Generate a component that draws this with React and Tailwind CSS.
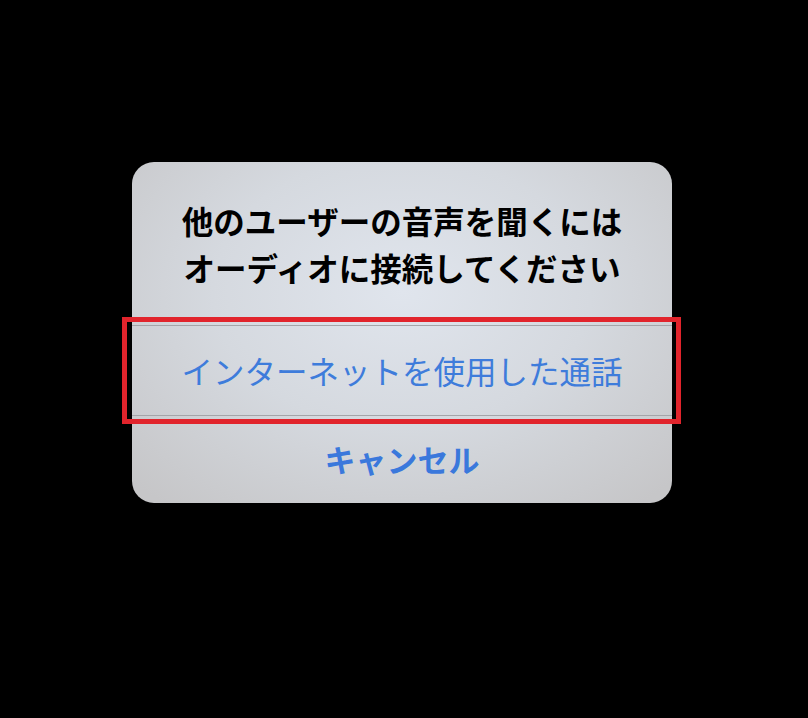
export default function App() {
  const font = { fontFamily: '"Noto Sans CJK JP", "Noto Sans", sans-serif' };
  return (
    <div className="w-[808px] h-[718px] bg-black overflow-hidden" style={font}>
      <div className="pt-[162px] pl-[132px]">
        <div className="relative w-[540px] rounded-[22px] bg-[radial-gradient(ellipse_70%_80%_at_50%_38%,#e0e5ed_0%,#d5d9df_50%,#c6c6c8_100%)] flex flex-col">
          <div className="pt-[35px] pb-[34px] text-center text-black font-bold text-[31.5px] leading-[47px]">
            <div>他のユーザーの音声を聞くには</div>
            <div>オーディオに接続してください</div>
          </div>
          <div className="h-px bg-[#a4a5a9]" />
          <div className="h-[89px] flex items-center justify-center text-[#3e7cdb] text-[31.5px] leading-none">
            インターネットを使用した通話
          </div>
          <div className="h-px bg-[#a4a5a9]" />
          <div className="h-[87px] flex items-center justify-center text-[#3a78dc] font-bold text-[31px] leading-none pb-[2px]">
            キャンセル
          </div>
          <div className="absolute left-[-10px] top-[155px] w-[559px] h-[107px] border-[5px] border-[#e1242c]" />
        </div>
      </div>
    </div>
  );
}
